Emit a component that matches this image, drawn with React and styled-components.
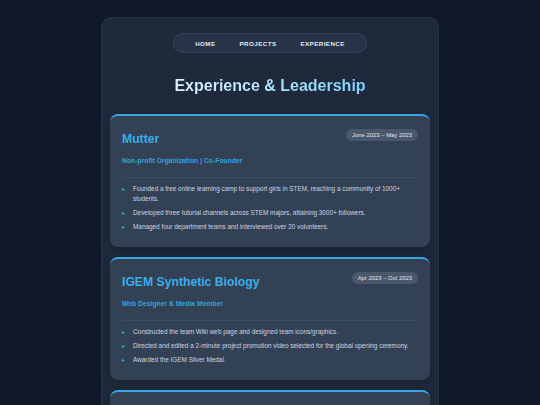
import React from "react";
import styled, { createGlobalStyle } from "styled-components";

const GlobalStyle = createGlobalStyle`
  html, body {
    margin: 0;
    padding: 0;
    background: #0f172a;
    font-family: "Liberation Sans", Arial, sans-serif;
  }
  body {
    height: 405px;
    overflow: hidden;
  }
`;

const Page = styled.div`
  display: flex;
  justify-content: center;
  padding-top: 17px;
`;

const Container = styled.main`
  width: 338px;
  box-sizing: border-box;
  background: #1e293b;
  border-radius: 10px;
  border: 1px solid rgba(255, 255, 255, 0.04);
  padding: 15px 8px 20px;
  display: flex;
  flex-direction: column;
  align-items: center;
`;

const Nav = styled.nav`
  display: flex;
  align-items: center;
  gap: 24px;
  height: 20px;
  box-sizing: border-box;
  padding: 0 21px;
  border-radius: 10px;
  background: #273447;
  border: 1px solid rgba(255, 255, 255, 0.07);
`;

const NavLink = styled.a`
  font-size: 6.2px;
  font-weight: 700;
  letter-spacing: 0.45px;
  color: #e2e8f0;
  text-decoration: none;
`;

const Title = styled.h1`
  margin: 23px 0 19px;
  font-size: 16px;
  line-height: 19px;
  font-weight: 700;
  background: linear-gradient(90deg, #e0f2fe 0%, #bae6fd 40%, #7dd3fc 100%);
  -webkit-background-clip: text;
  background-clip: text;
  color: transparent;
`;

const List = styled.div`
  display: flex;
  flex-direction: column;
  gap: 10px;
  width: 100%;
`;

const Card = styled.section`
  background: #334155;
  border-radius: 8px;
  border-top: 2px solid #38a6e0;
  padding: 14px 12px 11px;
  box-shadow: 0 2px 6px rgba(0, 0, 0, 0.25);
`;

const CardHead = styled.div`
  display: flex;
  justify-content: space-between;
  align-items: flex-start;
`;

const Org = styled.h2`
  margin: 0;
  font-size: 12.2px;
  line-height: 18px;
  font-weight: 700;
  color: #3aaee8;
`;

const DatePill = styled.span`
  flex: none;
  height: 12px;
  line-height: 12px;
  padding: 0 6px;
  margin-top: -1px;
  border-radius: 6px;
  background: #4a586b;
  color: #e2e8f0;
  font-size: 5.9px;
`;

const Role = styled.p`
  margin: 8px 0 0;
  font-size: 6.8px;
  line-height: 10px;
  font-weight: 700;
  color: #2fa3de;
`;

const Divider = styled.hr`
  margin: 11px 0 6px;
  border: 0;
  height: 1px;
  background: rgba(255, 255, 255, 0.07);
`;

const Bullets = styled.ul`
  margin: 0;
  padding: 0;
  list-style: none;
`;

const Bullet = styled.li`
  display: flex;
  margin-bottom: 4px;
  font-size: 6.4px;
  line-height: 10px;
  color: #cbd5e1;

  &::before {
    content: "▸";
    flex: none;
    width: 11px;
    color: #38a6e0;
    font-family: "DejaVu Sans", sans-serif;
    font-size: 6px;
  }
`;

const experiences = [
  {
    org: "Mutter",
    date: "June 2023 – May 2023",
    role: "Non-profit Organization | Co-Founder",
    points: [
      "Founded a free online learning camp to support girls in STEM, reaching a community of 1000+ students.",
      "Developed three tutorial channels across STEM majors, attaining 3000+ followers.",
      "Managed four department teams and interviewed over 20 volunteers.",
    ],
  },
  {
    org: "IGEM Synthetic Biology",
    date: "Apr 2023 – Oct 2023",
    role: "Web Designer & Media Member",
    points: [
      "Constructed the team Wiki web page and designed team icons/graphics.",
      "Directed and edited a 2-minute project promotion video selected for the global opening ceremony.",
      "Awarded the IGEM Silver Medal.",
    ],
  },
  {
    org: "Student Council",
    date: "Sep 2022 – Jun 2023",
    role: "Publicity Officer",
    points: [
      "Designed posters and social media content for school events.",
      "Coordinated with clubs to promote activities across campus.",
    ],
  },
];

export default function App() {
  return (
    <>
      <GlobalStyle />
      <Page>
        <Container>
          <Nav>
            <NavLink href="#">HOME</NavLink>
            <NavLink href="#">PROJECTS</NavLink>
            <NavLink href="#">EXPERIENCE</NavLink>
          </Nav>
          <Title>Experience &amp; Leadership</Title>
          <List>
            {experiences.map((exp) => (
              <Card key={exp.org}>
                <CardHead>
                  <Org>{exp.org}</Org>
                  <DatePill>{exp.date}</DatePill>
                </CardHead>
                <Role>{exp.role}</Role>
                <Divider />
                <Bullets>
                  {exp.points.map((p) => (
                    <Bullet key={p}>{p}</Bullet>
                  ))}
                </Bullets>
              </Card>
            ))}
          </List>
        </Container>
      </Page>
    </>
  );
}
